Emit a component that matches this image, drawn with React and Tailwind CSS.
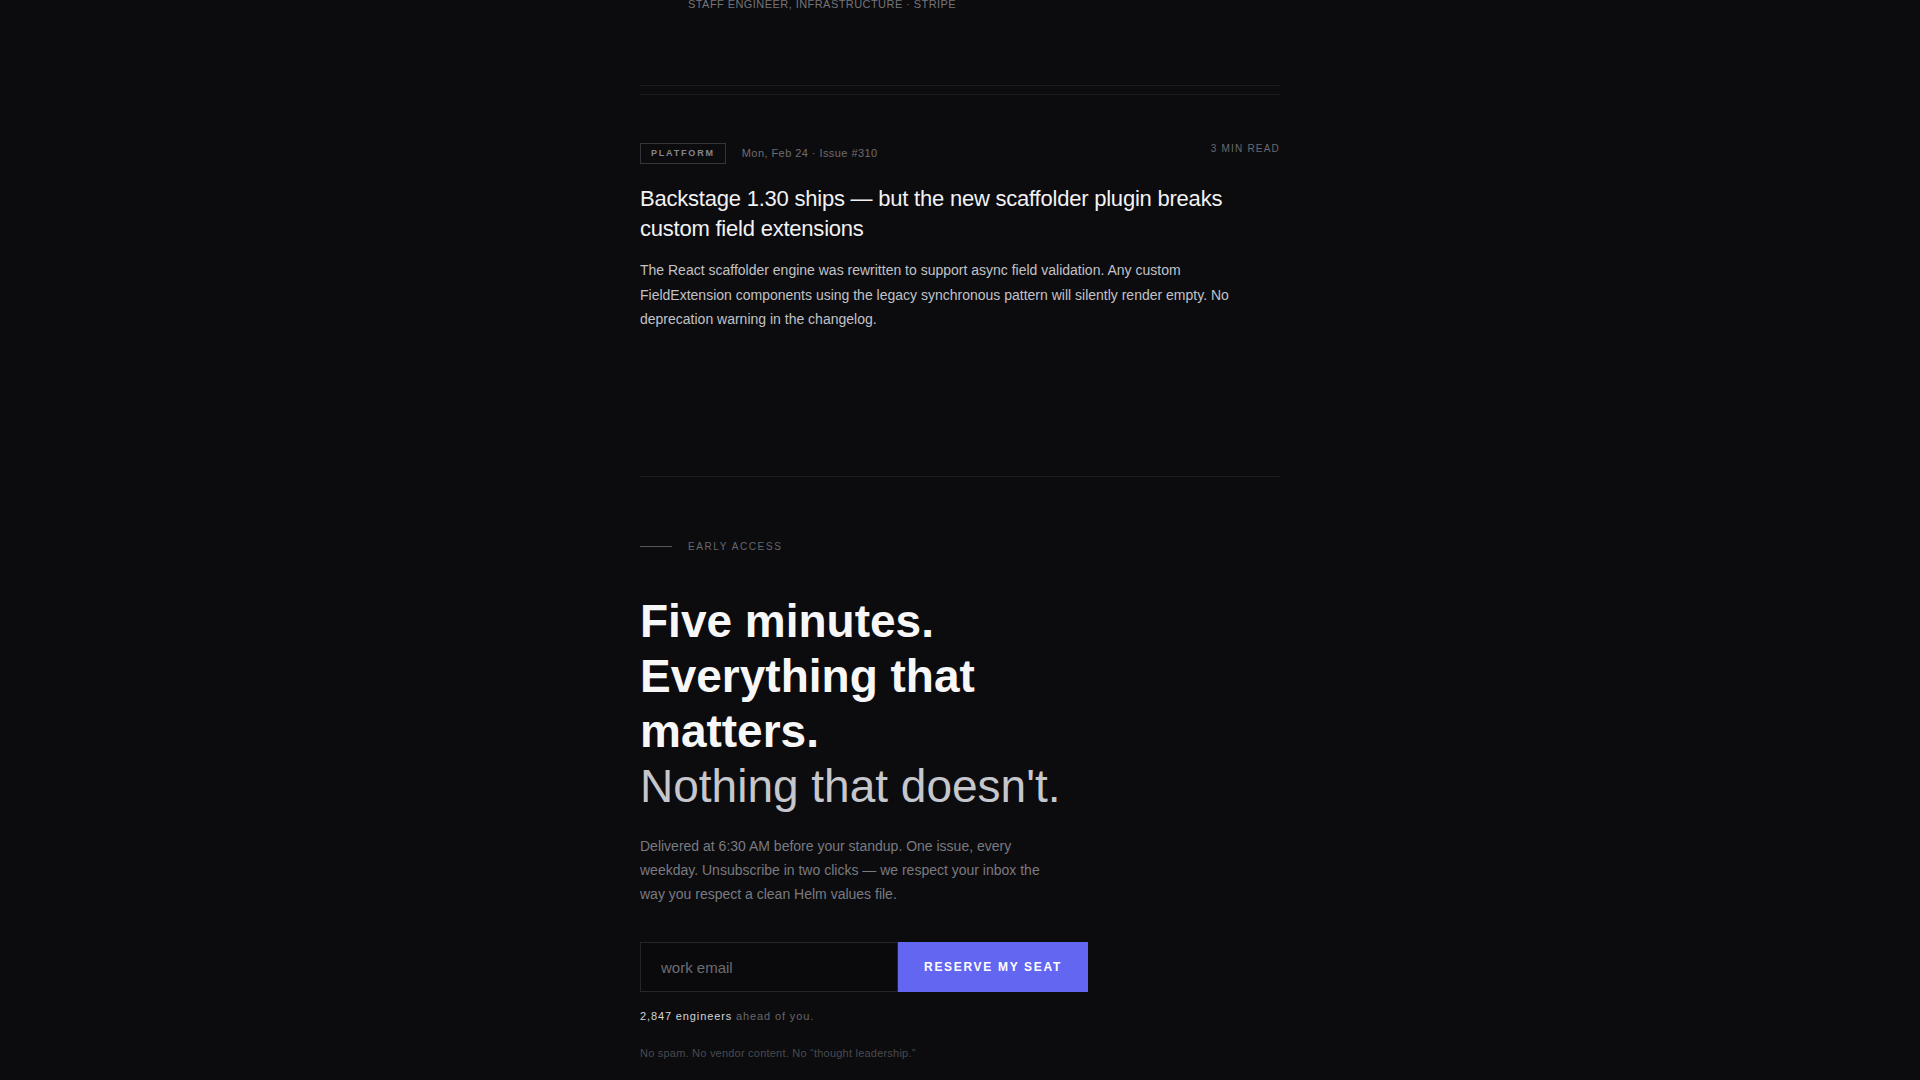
import React from 'react';

const App = () => {
  return (
    <div className="min-h-screen bg-[#0c0c0e] font-['Liberation_Sans',Arial,sans-serif] overflow-hidden">
      <div className="mx-auto w-[640px]">
        {/* Tail of the previous issue card */}
        <div className="-mt-[4px] pl-12">
          <p className="text-[11px] leading-4 uppercase tracking-[0.04em] text-[#74747a]">
            Staff Engineer, Infrastructure · Stripe
          </p>
        </div>
        <div className="mt-[73px] h-px bg-[#1c1c20]" />
        <div className="mt-2 h-px bg-[#19191d]" />

        {/* Issue card */}
        <article className="pt-12">
          <div className="flex items-start justify-between">
            <div className="flex items-center gap-4">
              <span className="flex h-[21px] items-center border border-[#34343a] px-[10px] text-[9px] font-bold uppercase tracking-[0.2em] text-[#85858c]">
                Platform
              </span>
              <span className="text-[11px] tracking-[0.04em] text-[#6c6c72]">Mon, Feb 24 · Issue #310</span>
            </div>
            <span className="text-[10px] leading-[12px] uppercase tracking-[0.12em] text-[#6a6a70]">3 min read</span>
          </div>
          <h3 className="mt-5 text-[22px] leading-[30px] tracking-[-0.01em] text-[#f2f2f4]">
            Backstage 1.30 ships — but the new scaffolder plugin breaks custom field extensions
          </h3>
          <p className="mt-3.5 max-w-[600px] text-[14px] leading-[1.75] text-[#c2c2c8]">
            The React scaffolder engine was rewritten to support async field validation. Any custom FieldExtension
            components using the legacy synchronous pattern will silently render empty. No deprecation warning in the
            changelog.
          </p>
        </article>

        <div className="mt-[144px] h-px bg-[#1e1e22]" />

        {/* Signup */}
        <section className="pt-[62px]">
          <div className="flex items-center gap-4">
            <span className="h-px w-8 bg-[#55555b]" />
            <span className="text-[10px] uppercase tracking-[0.16em] text-[#67676d]">Early access</span>
          </div>
          <h2 className="mt-10 max-w-[480px] text-[46px] leading-[1.2] font-bold text-[#f7f7f8]">
            Five minutes. Everything that matters.
            <span className="block font-normal text-[#c6c6cd]">Nothing that doesn't.</span>
          </h2>
          <p className="mt-5 max-w-[420px] text-[14px] leading-[24px] text-[#7a7a81]">
            Delivered at 6:30 AM before your standup. One issue, every weekday. Unsubscribe in two clicks — we respect
            your inbox the way you respect a clean Helm values file.
          </p>
          <form className="mt-9 flex h-[50px] w-[448px]" onSubmit={(e) => e.preventDefault()}>
            <input
              type="email"
              placeholder="work email"
              className="h-full w-[258px] border border-[#25252a] bg-[#0a0a0c] px-5 text-[15px] text-[#e4e4e7] outline-none placeholder:text-[#6c6c72]"
            />
            <button
              type="submit"
              className="h-full flex-1 bg-[#6366f1] text-[12px] font-bold uppercase tracking-[0.14em] text-white"
            >
              Reserve my seat
            </button>
          </form>
          <p className="mt-4 text-[11px] leading-4 tracking-[0.08em] text-[#66666c]">
            <span className="text-[#d4d4d8]">2,847 engineers</span> ahead of you.
          </p>
          <p className="mt-[22px] text-[11px] leading-[15px] tracking-[0.02em] text-[#4a4a50]">
            No spam. No vendor content. No “thought leadership.”
          </p>
        </section>
      </div>
    </div>
  );
};

export default App;
